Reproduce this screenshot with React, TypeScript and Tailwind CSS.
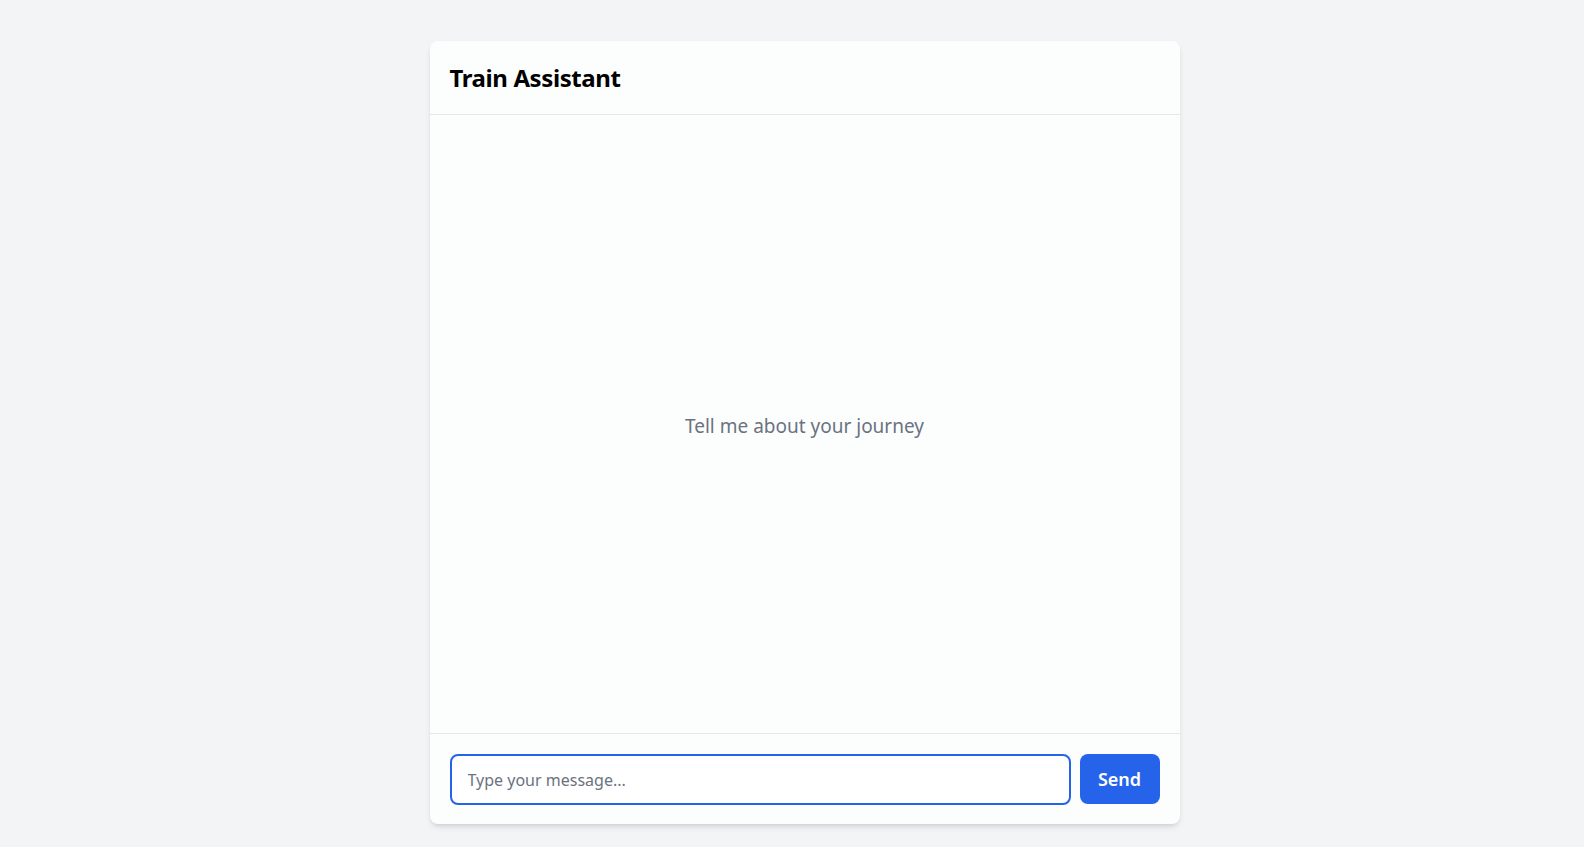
import React from "react";

export default function App() {
  return (
    <div
      className="min-h-[847px] w-full bg-[#f3f4f6] flex justify-center pt-[41px]"
      style={{ fontFamily: '"Noto Sans", "Open Sans", sans-serif' }}
    >
      <div className="ml-[25px] w-[750px] h-[783px] bg-[#fcfefe] rounded-lg shadow-md flex flex-col">
        <div className="px-5 pt-[21px] pb-5 border-b border-[#e5e7eb]">
          <h1 className="text-2xl leading-8 font-bold text-black tracking-[-0.4px]">Train Assistant</h1>
        </div>
        <div className="flex-1 flex items-center justify-center pt-[4px]">
          <p className="text-[19px] text-[#6b7280]">Tell me about your journey</p>
        </div>
        <div className="border-t border-[#e5e7eb] px-5 pt-5 pb-[19px] flex gap-[9px]">
          <input
            className="flex-1 h-[51px] rounded-lg border-2 border-[#2563eb] bg-white px-4 text-base text-gray-700 placeholder:text-[#6b7280] outline-none"
            placeholder="Type your message..."
          />
          <button className="w-[80px] h-[50px] rounded-lg bg-[#2563eb] text-white text-lg font-semibold">
            Send
          </button>
        </div>
      </div>
    </div>
  );
}
